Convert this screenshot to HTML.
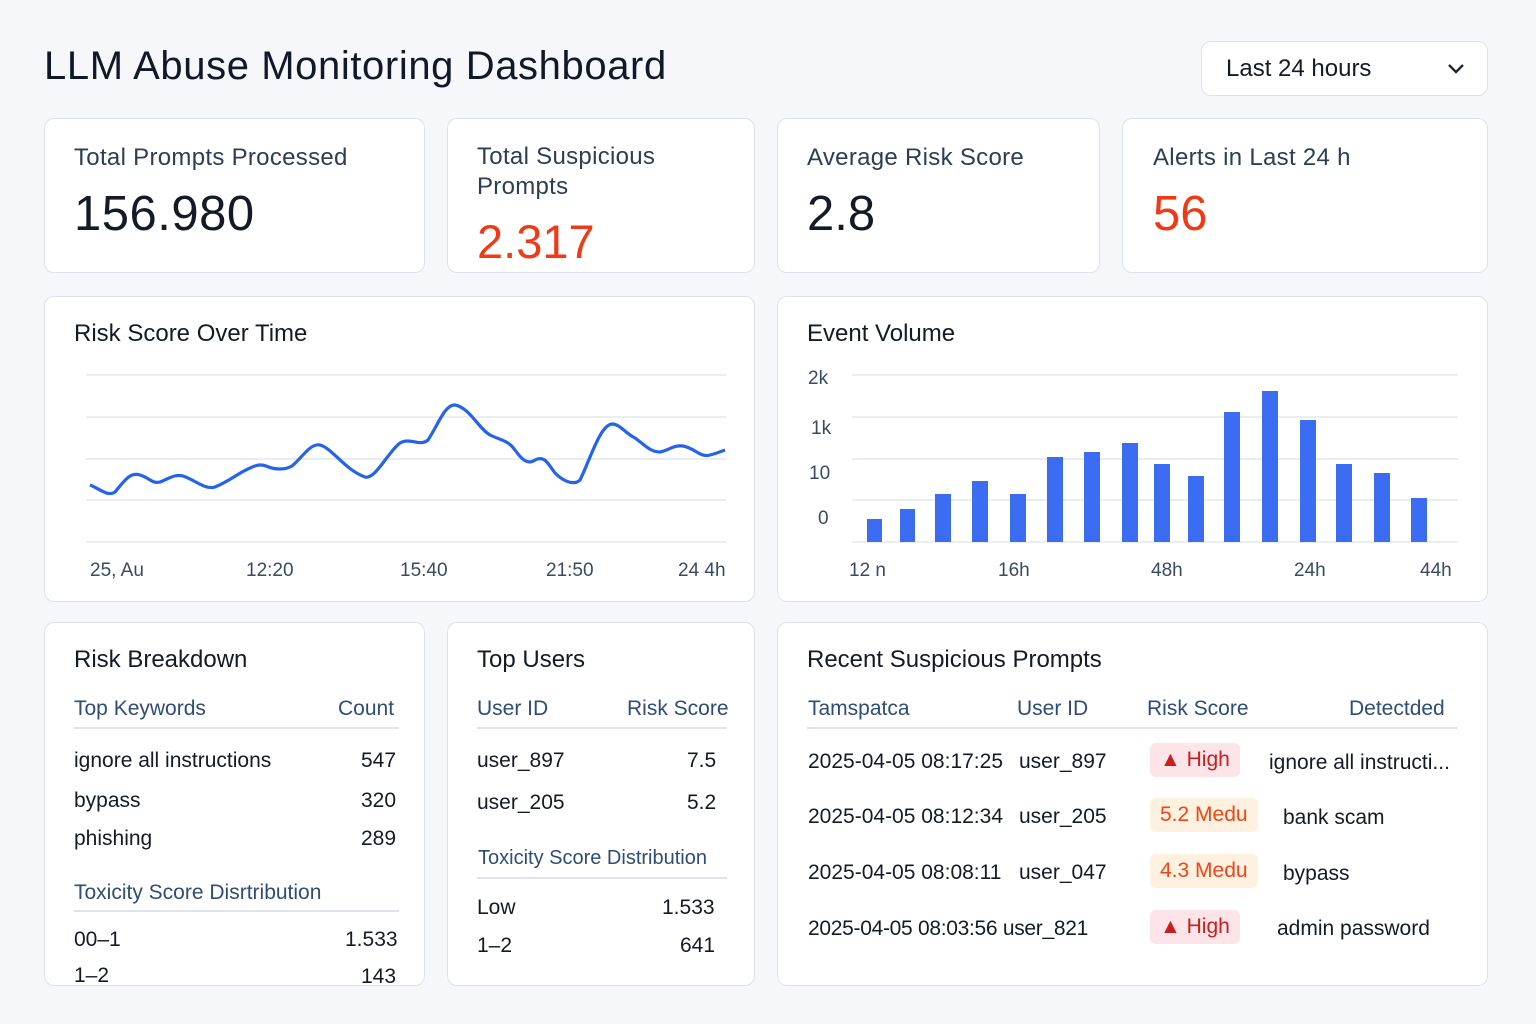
<!DOCTYPE html>
<html><head><meta charset="utf-8"><style>
*{margin:0;padding:0;box-sizing:border-box}
body{width:1536px;height:1024px;background:#f6f7fa;font-family:"Liberation Sans",sans-serif;color:#141a26;position:relative;overflow:hidden}
.c{position:absolute;background:#fff;border:1.5px solid #dde2ea;border-radius:10px}
.t{position:absolute;white-space:nowrap;line-height:1}
.lb{color:#2d3d56;font-size:24px;letter-spacing:0.3px}
.h{font-size:24px;color:#141a26}
.th{color:#2f4d74;font-size:21px}
.td{font-size:21px;color:#141a26}
.hr{position:absolute;height:2px;background:#dfe4ec}
.badge{position:absolute;border-radius:6px;font-size:21px;line-height:34px;padding:0 10px}
</style></head><body>
<div class="t" style="left:44px;top:46px;font-size:40px;letter-spacing:0.6px;color:#111827">LLM Abuse Monitoring Dashboard</div>
<div class="c" style="left:1201px;top:41px;width:287px;height:55px"></div>
<div class="t" style="left:1226px;top:57px;font-size:24px">Last 24 hours</div>
<svg style="position:absolute;left:1446px;top:62px" width="20" height="14"><path d="M3 3 L10 10 L17 3" stroke="#1f2937" stroke-width="2.4" fill="none"/></svg>

<div class="c" style="left:44px;top:118px;width:381px;height:155px"></div>
<div class="t lb" style="left:74px;top:146px">Total Prompts Processed</div>
<div class="t" style="left:74px;top:190px;font-size:49px;letter-spacing:0.5px">156.980</div>
<div class="c" style="left:447px;top:118px;width:308px;height:155px"></div>
<div class="t lb" style="left:477px;top:142px;line-height:30px">Total Suspicious<br>Prompts</div>
<div class="t" style="left:477px;top:218px;font-size:47px;color:#f03a17">2.317</div>
<div class="c" style="left:777px;top:118px;width:323px;height:155px"></div>
<div class="t lb" style="left:807px;top:146px">Average Risk Score</div>
<div class="t" style="left:807px;top:190px;font-size:49px">2.8</div>
<div class="c" style="left:1122px;top:118px;width:366px;height:155px"></div>
<div class="t lb" style="left:1153px;top:146px">Alerts in Last 24 h</div>
<div class="t" style="left:1153px;top:190px;font-size:49px;color:#f03a17">56</div>

<div class="c" style="left:44px;top:296px;width:711px;height:306px"></div>
<div class="t h" style="left:74px;top:322px">Risk Score Over Time</div>
<svg style="position:absolute;left:0;top:0" width="760" height="600">
<g stroke="#e4e7ee" stroke-width="1.5"><line x1="86" y1="375" x2="726" y2="375"/><line x1="86" y1="417" x2="726" y2="417"/><line x1="86" y1="459" x2="726" y2="459"/><line x1="86" y1="500" x2="726" y2="500"/><line x1="86" y1="542" x2="726" y2="542"/></g>
<path d="M90 485 C100 489,108 497,115 492 C125 480,130 472,140 475 C150 478,152 484,160 482 C170 478,175 474,183 476 C195 480,205 490,215 487 C225 483,232 478,242 472 C252 467,258 463,266 466 C275 470,285 470,292 466 C302 458,310 443,320 445 C332 448,345 470,365 477 C375 480,388 452,400 443 C410 437,420 447,428 440 C438 425,445 404,455 405 C470 408,478 428,490 435 C500 440,508 440,515 450 C522 460,528 465,535 460 C545 455,548 464,555 473 C565 483,575 485,580 480 C590 460,600 425,612 424 C620 424,625 433,635 438 C645 445,650 452,660 452 C670 450,673 445,683 446 C695 448,700 458,710 455 C718 453,722 451,725 450" stroke="#2563eb" stroke-width="3.2" fill="none"/>
</svg>
<div class="t" style="left:90px;top:561px;font-size:19px;color:#3a4a63">25, Au</div>
<div class="t" style="left:246px;top:561px;font-size:19px;color:#3a4a63">12:20</div>
<div class="t" style="left:400px;top:561px;font-size:19px;color:#3a4a63">15:40</div>
<div class="t" style="left:546px;top:561px;font-size:19px;color:#3a4a63">21:50</div>
<div class="t" style="left:678px;top:561px;font-size:19px;color:#3a4a63">24 4h</div>

<div class="c" style="left:777px;top:296px;width:711px;height:306px"></div>
<div class="t h" style="left:807px;top:322px">Event Volume</div>
<svg style="position:absolute;left:0;top:0" width="1536" height="600">
<g stroke="#e4e7ee" stroke-width="1.5"><line x1="852" y1="375" x2="1458" y2="375"/><line x1="852" y1="417" x2="1458" y2="417"/><line x1="852" y1="459" x2="1458" y2="459"/><line x1="852" y1="500" x2="1458" y2="500"/><line x1="852" y1="542" x2="1458" y2="542"/></g>
<g fill="#3b6cf2">
<rect x="867" y="519" width="15" height="23"/><rect x="900" y="509" width="15" height="33"/><rect x="935" y="494" width="16" height="48"/><rect x="972" y="481" width="16" height="61"/><rect x="1010" y="494" width="16" height="48"/><rect x="1047" y="457" width="16" height="85"/><rect x="1084" y="452" width="16" height="90"/><rect x="1122" y="443" width="16" height="99"/><rect x="1154" y="464" width="16" height="78"/><rect x="1188" y="476" width="16" height="66"/><rect x="1224" y="412" width="16" height="130"/><rect x="1262" y="391" width="16" height="151"/><rect x="1300" y="420" width="16" height="122"/><rect x="1336" y="464" width="16" height="78"/><rect x="1374" y="473" width="16" height="69"/><rect x="1411" y="498" width="16" height="44"/>
</g></svg>
<div class="t" style="left:808px;top:369px;font-size:19px;color:#3a4a63">2k</div>
<div class="t" style="left:811px;top:419px;font-size:19px;color:#3a4a63">1k</div>
<div class="t" style="left:809px;top:464px;font-size:19px;color:#3a4a63">10</div>
<div class="t" style="left:818px;top:509px;font-size:19px;color:#3a4a63">0</div>
<div class="t" style="left:849px;top:561px;font-size:19px;color:#3a4a63">12 n</div>
<div class="t" style="left:998px;top:561px;font-size:19px;color:#3a4a63">16h</div>
<div class="t" style="left:1151px;top:561px;font-size:19px;color:#3a4a63">48h</div>
<div class="t" style="left:1294px;top:561px;font-size:19px;color:#3a4a63">24h</div>
<div class="t" style="left:1420px;top:561px;font-size:19px;color:#3a4a63">44h</div>

<div class="c" style="left:44px;top:622px;width:381px;height:364px"></div>
<div class="t h" style="left:74px;top:648px">Risk Breakdown</div>
<div class="t th" style="left:74px;top:698px">Top Keywords</div>
<div class="t th" style="left:338px;top:698px">Count</div>
<div class="hr" style="left:74px;top:727px;width:325px"></div>
<div class="t td" style="left:74px;top:750px">ignore all instructions</div><div class="t td" style="left:361px;top:750px">547</div>
<div class="t td" style="left:74px;top:790px">bypass</div><div class="t td" style="left:361px;top:790px">320</div>
<div class="t td" style="left:74px;top:828px">phishing</div><div class="t td" style="left:361px;top:828px">289</div>
<div class="t th" style="left:74px;top:882px">Toxicity Score Disrtribution</div>
<div class="hr" style="left:74px;top:910px;width:325px"></div>
<div class="t td" style="left:74px;top:929px">00–1</div><div class="t td" style="left:345px;top:929px">1.533</div>
<div class="t td" style="left:74px;top:965px">1–2</div><div class="t td" style="left:361px;top:966px">143</div>

<div class="c" style="left:447px;top:622px;width:308px;height:364px"></div>
<div class="t h" style="left:477px;top:648px">Top Users</div>
<div class="t th" style="left:477px;top:698px">User ID</div>
<div class="t th" style="left:627px;top:698px">Risk Score</div>
<div class="hr" style="left:477px;top:727px;width:250px"></div>
<div class="t td" style="left:477px;top:750px">user_897</div><div class="t td" style="left:687px;top:750px">7.5</div>
<div class="t td" style="left:477px;top:792px">user_205</div><div class="t td" style="left:687px;top:792px">5.2</div>
<div class="t th" style="left:478px;top:848px;font-size:20px">Toxicity Score Distribution</div>
<div class="hr" style="left:477px;top:877px;width:250px"></div>
<div class="t td" style="left:477px;top:897px">Low</div><div class="t td" style="left:662px;top:897px">1.533</div>
<div class="t td" style="left:477px;top:935px">1–2</div><div class="t td" style="left:680px;top:935px">641</div>

<div class="c" style="left:777px;top:622px;width:711px;height:364px"></div>
<div class="t h" style="left:807px;top:648px">Recent Suspicious Prompts</div>
<div class="t th" style="left:808px;top:698px">Tamspatca</div>
<div class="t th" style="left:1017px;top:698px">User ID</div>
<div class="t th" style="left:1147px;top:698px">Risk Score</div>
<div class="t th" style="left:1349px;top:698px">Detectded</div>
<div class="hr" style="left:807px;top:727px;width:650px"></div>
<div class="t td" style="left:808px;top:751px">2025-04-05 08:17:25</div><div class="t td" style="left:1019px;top:751px">user_897</div>
<div class="t td" style="left:808px;top:806px">2025-04-05 08:12:34</div><div class="t td" style="left:1019px;top:806px">user_205</div>
<div class="t td" style="left:808px;top:862px">2025-04-05 08:08:11</div><div class="t td" style="left:1019px;top:862px">user_047</div>
<div class="t td" style="left:808px;top:918px;letter-spacing:-0.3px">2025-04-05 08:03:56 user_821</div>
<div class="badge" style="left:1150px;top:743px;background:#fde4e8;color:#c81e1e">▲ High</div>
<div class="badge" style="left:1150px;top:798px;background:#fff1e0;color:#f0451a">5.2 Medu</div>
<div class="badge" style="left:1150px;top:854px;background:#fff1e0;color:#f0451a">4.3 Medu</div>
<div class="badge" style="left:1150px;top:910px;background:#fde4e8;color:#c81e1e">▲ High</div>
<div class="t td" style="left:1269px;top:752px">ignore all instructi...</div>
<div class="t td" style="left:1283px;top:807px">bank scam</div>
<div class="t td" style="left:1283px;top:863px">bypass</div>
<div class="t td" style="left:1277px;top:918px">admin password</div>
</body></html>
